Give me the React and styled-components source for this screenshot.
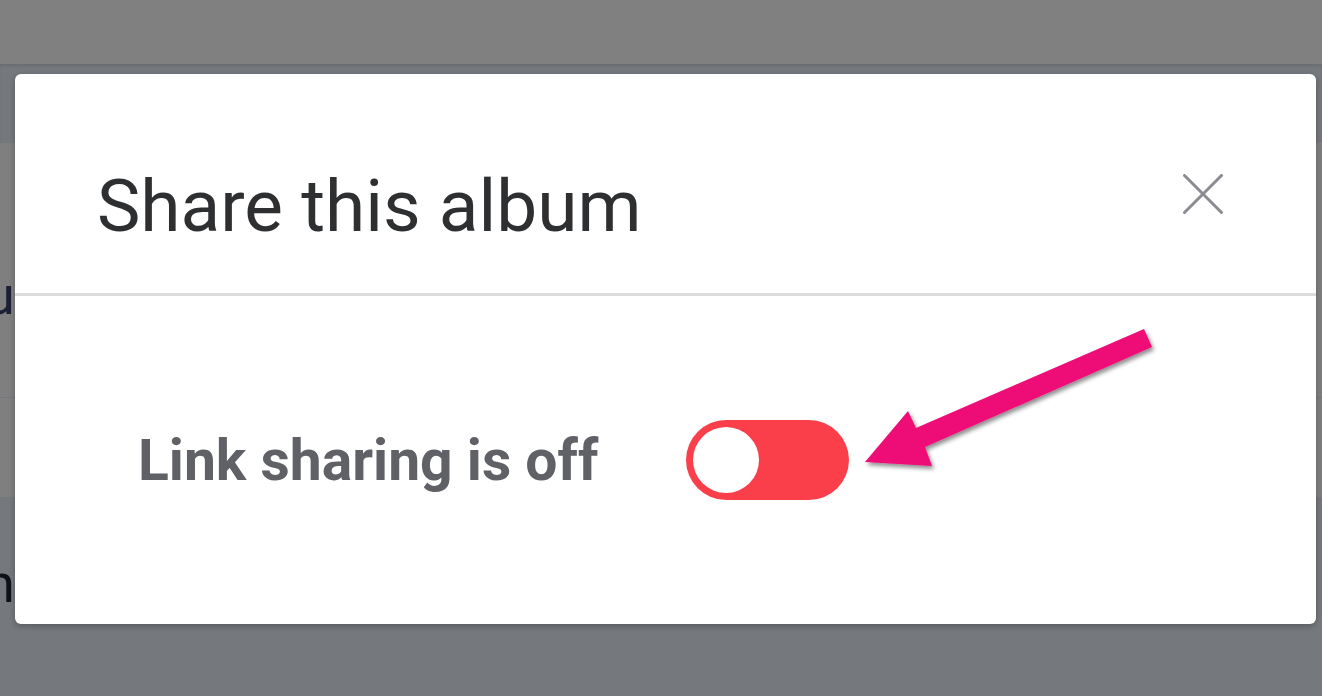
import styled, { createGlobalStyle } from "styled-components";

const GlobalStyle = createGlobalStyle`
  html, body {
    margin: 0;
    padding: 0;
    background: #75787c;
  }
  * {
    box-sizing: border-box;
  }
`;

export default function App() {
  return (
    <Page>
      <GlobalStyle />
      <TopBar />
      <Toolbar />
      <Section>
        <Glyph top="126px" color="#1b2036">u</Glyph>
      </Section>
      <Footer>
        <Glyph top="60px" color="#0f1218">h</Glyph>
      </Footer>

      <Modal role="dialog" aria-label="Share this album">
        <Header>
          <Title>Share this album</Title>
          <CloseButton aria-label="Close">
            <svg width="40" height="40" viewBox="0 0 40 40">
              <path
                d="M1.5 1.5 L38.5 38.5 M38.5 1.5 L1.5 38.5"
                stroke="#8a8b90"
                strokeWidth="3"
                strokeLinecap="round"
              />
            </svg>
          </CloseButton>
        </Header>
        <Body>
          <Label>Link sharing is off</Label>
          <Toggle>
            <Knob />
          </Toggle>
        </Body>
      </Modal>

      <Arrow width="1322" height="696" viewBox="0 0 1322 696">
        <defs>
          <filter id="drop" x="-10%" y="-20%" width="130%" height="150%">
            <feDropShadow dx="2" dy="3" stdDeviation="2" floodColor="#000" floodOpacity="0.45" />
          </filter>
        </defs>
        <polygon
          points="1144,329 916,428 908,411 865,462 932,466 925,447 1152,347"
          fill="#ee0a76"
          filter="url(#drop)"
        />
      </Arrow>
    </Page>
  );
}

const Page = styled.div`
  position: relative;
  width: 1322px;
  height: 696px;
  overflow: hidden;
  display: flex;
  flex-direction: column;
  background: #75787c;
  font-family: Roboto, "Liberation Sans", sans-serif;
`;

const TopBar = styled.div`
  height: 64px;
  background: #808080;
  flex: none;
`;

const Toolbar = styled.div`
  height: 79px;
  background: #75787c;
  box-shadow: inset 0 3px 4px -2px rgba(0, 0, 0, 0.15);
  flex: none;
`;

const Section = styled.div`
  position: relative;
  height: 354px;
  background: #7f7f7f;
  background-image: linear-gradient(#74777d, #74777d);
  background-size: 100% 1px;
  background-position: 0 254px;
  background-repeat: no-repeat;
  flex: none;
`;

const Footer = styled.div`
  position: relative;
  flex: 1;
  background: #75787c;
`;

const Glyph = styled.span`
  position: absolute;
  top: ${({ top }) => top};
  left: -15px;
  font-family: Roboto, "Liberation Sans", sans-serif;
  font-size: 54px;
  line-height: 1;
  color: ${({ color }) => color};
`;

const Modal = styled.div`
  position: absolute;
  left: 15px;
  top: 74px;
  width: 1301px;
  height: 550px;
  background: #ffffff;
  border-radius: 6px;
  box-shadow: 0 2px 6px rgba(0, 0, 0, 0.25);
  display: flex;
  flex-direction: column;
  overflow: hidden;
`;

const Header = styled.div`
  height: 222px;
  flex: none;
  display: flex;
  align-items: flex-start;
  justify-content: space-between;
  padding: 96px 93px 0 82px;
  border-bottom: 3px solid #dcdcdc;
`;

const Title = styled.h1`
  margin: 0;
  font-family: Roboto, "Liberation Sans", sans-serif;
  font-weight: 400;
  font-size: 73px;
  line-height: 1;
  color: #2e2f31;
`;

const CloseButton = styled.button`
  border: 0;
  padding: 0;
  background: transparent;
  width: 40px;
  height: 40px;
  display: flex;
  cursor: pointer;
  margin-top: 4px;
`;

const Body = styled.div`
  flex: 1;
  display: flex;
  align-items: center;
  gap: 88px;
  padding: 0 0 0 123px;
`;

const Label = styled.span`
  font-family: Roboto, "Liberation Sans", sans-serif;
  font-weight: 700;
  font-size: 57px;
  color: #5f6166;
`;

const Toggle = styled.div`
  width: 163px;
  height: 80px;
  border-radius: 40px;
  background: #fb3f4a;
  display: flex;
  align-items: center;
  padding: 0 7px;
  flex: none;
`;

const Knob = styled.div`
  width: 66px;
  height: 66px;
  border-radius: 50%;
  background: #ffffff;
  box-shadow: 0 0 0 1px rgba(251, 63, 74, 0.4);
`;

const Arrow = styled.svg`
  position: absolute;
  left: 0;
  top: 0;
  pointer-events: none;
`;
